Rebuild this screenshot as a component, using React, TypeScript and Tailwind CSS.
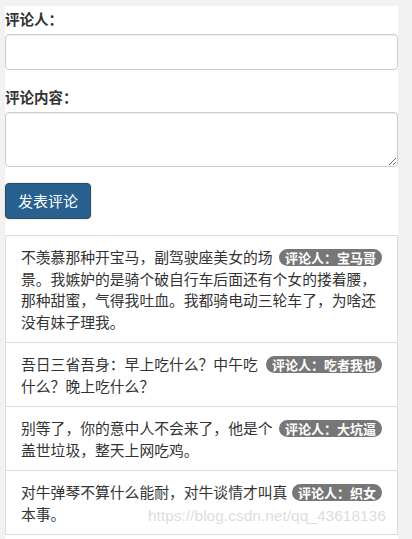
import React from "react";

const comments = [
  { text: "不羡慕那种开宝马，副驾驶座美女的场景。我嫉妒的是骑个破自行车后面还有个女的搂着腰，那种甜蜜，气得我吐血。我都骑电动三轮车了，为啥还没有妹子理我。", author: "宝马哥" },
  { text: "吾日三省吾身：早上吃什么？中午吃什么？晚上吃什么？", author: "吃者我也" },
  { text: "别等了，你的意中人不会来了，他是个盖世垃圾，整天上网吃鸡。", author: "大坑逼" },
  { text: "对牛弹琴不算什么能耐，对牛谈情才叫真本事。", author: "织女" },
];

export default function App() {
  return (
    <div
      className="relative w-[412px] h-[539px] overflow-hidden bg-[#f2f2f2] text-[#333]"
      style={{ fontFamily: '"Microsoft YaHei", "Noto Sans CJK SC", "Liberation Sans", sans-serif' }}
    >
      <div className="ml-[5px] mt-[6px] w-[393px] h-[600px] bg-white pt-[3px]">
        <label className="block text-[14.5px] font-bold leading-[20px] mb-[5px]">评论人：</label>
        <input
          type="text"
          className="block w-full h-[36px] rounded-[4px] border border-[#ccc] bg-white px-3 shadow-[inset_0_1px_1px_rgba(0,0,0,0.075)] outline-none"
        />
        <label className="block mt-[17px] text-[14.5px] font-bold leading-[20px] mb-[5px]">评论内容：</label>
        <textarea
          className="block w-full h-[55px] rounded-[4px] border border-[#ccc] bg-white px-3 py-1 shadow-[inset_0_1px_1px_rgba(0,0,0,0.075)] outline-none"
        />
        <button className="mt-[16px] h-[36px] w-[86px] rounded-[4px] border border-[#204d74] bg-[#286090] text-[15px] text-white leading-[20px] shadow-[0_0_2px_rgba(200,170,80,0.6)]">
          发表评论
        </button>
        <ul className="mt-[16px]">
          {comments.map((c, i) => (
            <li
              key={i}
              className="border border-[#ddd] -mt-px first:mt-0 px-[15px] py-[10px] text-[14.8px] leading-[21.5px] text-[#333]"
            >
              <span className="float-right mt-[3px] rounded-[10px] bg-[#777] px-[6px] py-[2px] text-[13px] font-bold leading-[13px] text-white">
                评论人：{c.author}
              </span>
              {c.text}
            </li>
          ))}
        </ul>
      </div>
      <div
        className="absolute left-[148px] top-[506px] text-[15.5px] leading-[20px] text-[rgba(190,190,190,0.55)]"
        style={{ fontFamily: '"Liberation Sans", Arial, sans-serif' }}
      >
        https://blog.csdn.net/qq_43618136
      </div>
    </div>
  );
}
